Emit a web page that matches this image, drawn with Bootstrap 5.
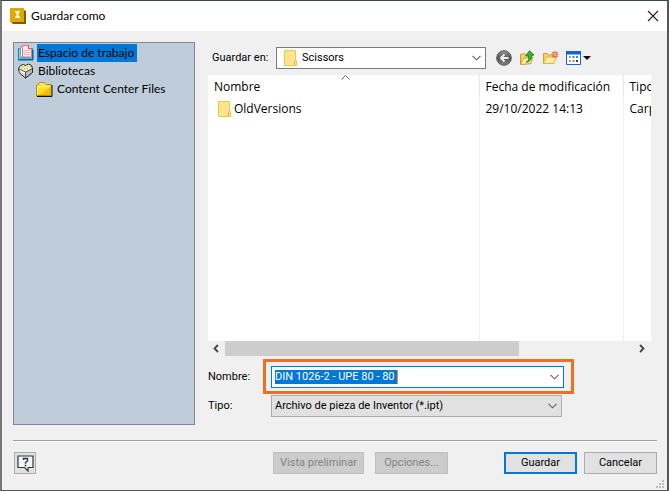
<!DOCTYPE html>
<html lang="es">
<head>
<meta charset="utf-8">
<meta name="viewport" content="width=device-width, initial-scale=1">
<title>Guardar como</title>
<link href="https://cdn.jsdelivr.net/npm/bootstrap@5.3.0/dist/css/bootstrap.min.css" rel="stylesheet">
<style>
  :root { --face: #f0f0f0; --accent: #0078d7; }
  body { font: 12px/18px "Open Sans", "Noto Sans", sans-serif; color: #000; background: var(--face); }
  svg { display: block; flex: none; }
  button, input, select { font: inherit; color: inherit; border-radius: 0; }
  .dialog { min-height: 100vh; border: 1px solid #55565b; border-width: 1px 2px 1px 2px; border-top-color: #3c4350; border-left-color: #77777a; background: var(--face); }
  .titlebar { height: 30px; padding: 0 8px 0 8px; background: #fff; }
  .title-text, .tree { font-family: Lato, "Open Sans", sans-serif; font-size: 12px; }
  .title-text { padding-left: 5px; }
  .plain { border: 0; background: none; padding: 0; }
  .content-area { padding: 11px 16px 15px 11px; gap: 13px; }
  .tree { width: 182px; border: 1px solid #828790; background: #bfcddb; padding: 1px 3px; }
  .tree li { height: 18px; gap: 3px; }
  .tree a { color: #000; text-decoration: none; line-height: 18px; padding: 0 2px 0 1px; }
  .tree a.chosen { background: var(--accent); padding-right: 3px; }
  .tree .child { padding-left: 19px; }
  .compact { font-family: Roboto, "Liberation Sans", sans-serif; font-size: 11px; }
  .place-row { padding: 5px 0 6px 4px; }
  .place-row label { width: 64px; }
  .place-box { width: 210px; height: 22px; border: 1px solid #7a7a7a; background: #fff; padding-left: 7px; }
  .drop { appearance: none; border: 0; background: no-repeat right 4px center url("data:image/svg+xml,%3Csvg xmlns='http://www.w3.org/2000/svg' width='9' height='6'%3E%3Cpath d='M.5.8l4 4 4-4' fill='none' stroke='%23606060' stroke-width='1.1'/%3E%3C/svg%3E"); min-width: 0; padding: 0 16px 0 5px; outline: 0; }
  .tools { gap: 7px; margin-left: 10px; }
  .files { background: #fff; overflow: hidden; }
  .files table { table-layout: fixed; width: 100%; min-width: 443px; height: 100%; border-collapse: collapse; }
  .files th { font-weight: 400; height: 23px; border-right: 1px solid #e3e6ee; }
  .files td { height: 22px; border-right: 1px solid #eceff6; }
  .files th, .files td { padding: 0 6px; white-space: nowrap; overflow: hidden; text-overflow: clip; }
  .files tr > :last-child { border-right: 0; padding-right: 0; }
  .files .filler td { height: auto; }
  .c-date { width: 144px; } .c-type { width: 28px; }
  .sorted { position: relative; }
  .sorted svg { position: absolute; top: 0; left: 49%; }
  .item { gap: 3px; padding-left: 4px; }
  .scroller { height: 15px; margin-bottom: 3px; }
  .scroller button { width: 17px; height: 15px; padding-left: 5px; }
  .thumb { width: 294px; background: #cdcdcd; }
  .name-label { width: 55px; } .type-label { width: 63px; }
  .callout { width: 311px; border: 3px solid #f26f21; padding: 4px 7px 3px 5px; }
  .name-box { height: 22px; border: 1px solid var(--accent); background: #fff; padding: 0 4px 0 3px; }
  .name-box input { width: 123px; height: 14px; border: 0; padding: 0; background: var(--accent); color: #fff; outline: 0; border-right: 1px solid #f28a3a; }
  .type-row { margin: 1px 0 8px; }
  .type-box { width: 291px; height: 22px; border: 1px solid #adadad; background-color: #e1e1e1; padding-left: 3px; }
  .footer-row { margin: 0 10px 0 11px; padding: 11px 0 16px 1px; border-top: 1px solid #a0a0a0; box-shadow: inset 0 1px #fff; gap: 7px; }
  .push { height: 22px; border: 1px solid #adadad; background: #e1e1e1; padding: 0; line-height: 18px; width: 73px; }
  .push:disabled { background: #ccc; border-color: #bfbfbf; color: #838383; }
  .push.main { border: 2px solid var(--accent); line-height: 16px; margin-left: 49px; }
  .push.wide { width: 91px; } .push.square { width: 22px; }
  .grip { position: absolute; right: 3px; bottom: 2px; }
</style>
<script src="https://cdn.jsdelivr.net/npm/bootstrap@5.3.0/dist/js/bootstrap.bundle.min.js"></script>
</head>
<body>
<svg width="0" height="0" class="position-absolute">
  <symbol id="folder" viewBox="0 0 13 16"><path d="M.5.5h11v10h1v5H.5z" fill="#ffe48f" stroke="#efc64c"/><path d="M10.5 15.500v-4l1-1" fill="none" stroke="#e3b22f"/></symbol>
</svg>
<main class="dialog d-flex flex-column position-relative">
  <header class="titlebar d-flex align-items-center">
    <svg width="16" height="16" viewBox="0 0 16 16"><path d="M14 2l2 1v13H3l-2-2z" fill="#7c5c08"/><path d="M0 0h14v14H0z" fill="#e0a800"/><path d="M5 3h5v1.500H8.500v4H10V10H5V8.500h1.500v-4H5z" fill="#fff"/></svg>
    <span class="title-text flex-grow-1">Guardar como</span>
    <button class="plain" aria-label="Cerrar"><svg width="12" height="12" viewBox="0 0 12 12"><path d="M1 1l10 10M11 1L1 11" stroke="#222" stroke-width="1.100"/></svg></button>
  </header>

  <div class="content-area d-flex flex-grow-1">
    <nav class="tree flex-shrink-0" aria-label="Ubicaciones">
      <ul class="list-unstyled m-0">
        <li class="d-flex align-items-center">
          <svg width="17" height="16" viewBox="0 0 17 16"><path d="M1.500 3.500h14v11h-14z" fill="#6fdcfa" stroke="#0a86c0"/><path d="M1 15h15V5" fill="none" stroke="#06527c"/><path d="M2 14l2-2h10l1 2z" fill="#35b8ea"/><path d="M3.500 1.500h5v10.500h-5z" fill="#f4f8ff" stroke="#b88ba8"/><path d="M5.500.5h6l3 3v8.500h-9z" fill="#ffeced" stroke="#e27585"/><path d="M11.500.5v3h3" fill="#fff" stroke="#d6404f"/><path d="M7 5.500h6M7 7.500h6M7 9.500h6" stroke="#f6b5bb"/></svg>
          <a href="#" class="chosen">Espacio de trabajo</a>
        </li>
        <li class="d-flex align-items-center">
          <svg width="17" height="16" viewBox="0 0 17 16"><path d="M1.500 5.500l2-3 3-1 2 1 3-1.500 3 1.500 1 3v4l-7 5.500-6-5z" fill="#fff" stroke="#1a1a1a"/><path d="M8.500 9l7-3.500v4l-7 5.500z" fill="#b9b9bd" stroke="#1a1a1a" stroke-width=".8"/><path d="M1.500 5.500l7 3.500" stroke="#444"/><path d="M4 3.500h2v2H4zM7 5h2v2H7zM9 2.500h2v2H9zM12 3h2v2h-2z" fill="#f0dc1c"/><path d="M6.500 3h1v1h-1zM10 5h1v1h-1z" fill="#888"/><path d="M3 8v2M5 9.500v2M7 10.500v2" stroke="#aaa"/></svg>
          <a href="#">Bibliotecas</a>
        </li>
        <li class="child d-flex align-items-center">
          <svg width="17" height="16" viewBox="0 0 17 16"><path d="M.5 14.500V4.500l2-1v-1l2-1h4l2 2h4.500v11z" fill="#ffdd28" stroke="#b88b00"/><path d="M1.500 13V5.500H14" fill="none" stroke="#fff6a0"/><path d="M3 14L14 6v8z" fill="#f7bd00"/><path d="M1 15.500h15V4" fill="none" stroke="#111"/><path d="M3.500 3h5" stroke="#fff8c0"/></svg>
          <a href="#">Content Center Files</a>
        </li>
      </ul>
    </nav>

    <section class="d-flex flex-column flex-fill overflow-hidden">
      <div class="place-row compact d-flex align-items-center">
        <label for="place">Guardar en:</label>
        <div class="place-box d-flex align-items-center">
          <svg width="13" height="16"><use href="#folder"/></svg>
          <select id="place" class="drop flex-grow-1 h-100"><option>Scissors</option></select>
        </div>
        <div class="tools d-flex align-items-center">
          <button class="plain" aria-label="Atrás"><svg width="16" height="16" viewBox="0 0 16 16"><defs><linearGradient id="gb" x2="0" y2="1"><stop stop-color="#999"/><stop offset=".5" stop-color="#555"/><stop offset="1" stop-color="#888"/></linearGradient></defs><circle cx="8" cy="8" r="7.300" fill="url(#gb)" stroke="#555"/><path d="M12.500 8H5M8.500 4.500L5 8l3.500 3.500" fill="none" stroke="#f0f0f0" stroke-width="2"/></svg></button>
          <button class="plain" aria-label="Subir un nivel"><svg width="16" height="16" viewBox="0 0 16 16"><path d="M1.500 14.500V4.500l4-1 1 1 5 1v8z" fill="#f5d263" stroke="#c99a28"/><path d="M1.500 14.500l3-6 9-1.500-1.500 6.500z" fill="#ffedaa" stroke="#d2a537"/><path d="M7 12c3-1 3-3 2.500-6H6.500L10.500.7 15 5l-2.500.5C13 9 11 12 7 12z" fill="#33b52e" stroke="#15721c" stroke-width=".8"/></svg></button>
          <button class="plain" aria-label="Nueva carpeta"><svg width="17" height="16" viewBox="0 0 17 16"><path d="M1.500 13.500V3.500h4l1 1.500h5v8.500z" fill="#f5d263" stroke="#d0a43d"/><path d="M1.500 13.500l3-6.500h10l-2.500 6.500z" fill="#ffeaa6" stroke="#dfb54d"/><path d="M13 1v7M9.500 4.500h7M10.500 2l5 5M15.500 2l-5 5" stroke="#ee5b35" stroke-width="1.200"/><circle cx="13" cy="4.500" r="1.300" fill="#ffd38a"/></svg></button>
          <button class="plain" aria-label="Vistas"><svg width="25" height="16" viewBox="0 0 25 16"><path d="M.5 1.500h14v13H.5z" fill="#fff" stroke="#1660cf"/><path d="M0 1h15v3.500H0z" fill="#1660cf"/><path d="M3 6h2v2H3zM3 10h2v2H3z" fill="#7aa5c4"/><path d="M6.500 6h2v2h-2z" fill="#4b8f4b"/><path d="M10 6h2v2h-2z" fill="#3a8fd0"/><path d="M6.500 10h2v2h-2z" fill="#e46b54"/><path d="M10 10h2v2h-2z" fill="#253c8c"/><path d="M17 6h8l-4 4z" fill="#111"/></svg></button>
        </div>
      </div>

      <div class="files flex-grow-1">
        <table>
          <colgroup><col><col class="c-date"><col class="c-type"></colgroup>
          <thead><tr><th class="sorted">Nombre<svg width="9" height="5" viewBox="0 0 9 5"><path d="M.5 4.500l4-4 4 4" fill="none" stroke="#666"/></svg></th><th>Fecha de modificación</th><th>Tipo</th></tr></thead>
          <tbody>
            <tr><td><div class="item d-flex align-items-center"><svg width="13" height="16"><use href="#folder"/></svg>OldVersions</div></td><td>29/10/2022 14:13</td><td>Carpeta</td></tr>
            <tr class="filler"><td></td><td></td><td></td></tr>
          </tbody>
        </table>
      </div>
      <div class="scroller d-flex">
        <button class="plain" aria-label="Desplazar a la izquierda"><svg width="6" height="9" viewBox="0 0 6 9"><path d="M5 1L1.500 4.500 5 8" fill="none" stroke="#444" stroke-width="1.800"/></svg></button>
        <div class="thumb"></div>
        <button class="plain ms-auto" aria-label="Desplazar a la derecha"><svg width="6" height="9" viewBox="0 0 6 9"><path d="M1 1l3.500 3.500L1 8" fill="none" stroke="#444" stroke-width="1.800"/></svg></button>
      </div>

      <div class="compact d-flex align-items-center">
        <label class="name-label" for="fname">Nombre:</label>
        <div class="callout">
          <div class="name-box d-flex align-items-center">
            <input id="fname" type="text" value="DIN 1026-2 - UPE 80 - 80">
            <button class="plain ms-auto" aria-label="Nombres recientes"><svg width="9" height="6" viewBox="0 0 9 6"><path d="M.5.8l4 4 4-4" fill="none" stroke="#606060" stroke-width="1.100"/></svg></button>
          </div>
        </div>
      </div>
      <div class="type-row compact d-flex align-items-center">
        <label class="type-label" for="ftype">Tipo:</label>
        <select id="ftype" class="drop type-box"><option>Archivo de pieza de Inventor (*.ipt)</option></select>
      </div>
    </section>
  </div>

  <footer class="footer-row compact d-flex align-items-center">
    <button class="push square d-flex align-items-center justify-content-center me-auto" aria-label="Ayuda"><svg width="17" height="17" viewBox="0 0 17 17"><path d="M1 1h15v11.500h-5V16l-3.500-3.500H1z" fill="#f4f7fc" stroke="#30353f" stroke-width="1.200"/><path d="M6.500 5V3.500h4V6L8.500 7.500v1.300" fill="none" stroke="#333" stroke-width="1.400"/><path d="M7.700 9.800h1.600v1.500H7.700z" fill="#222"/></svg></button>
    <button class="push wide me-1" disabled>Vista preliminar</button>
    <button class="push" disabled>Opciones...</button>
    <button class="push main">Guardar</button>
    <button class="push">Cancelar</button>
  </footer>
  <svg class="grip" width="8" height="8" viewBox="0 0 8 8"><path d="M6 0h2v2H6zM3 3h2v2H3zM6 3h2v2H6zM0 6h2v2H0zM3 6h2v2H3zM6 6h2v2H6z" fill="#bdbdbd"/></svg>
</main>
</body>
</html>
